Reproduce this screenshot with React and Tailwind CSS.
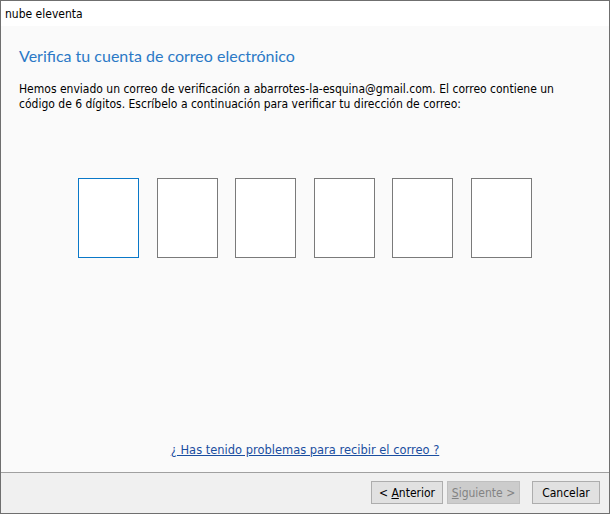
import React from "react";

export default function App() {
  const boxes = [0, 1, 2, 3, 4, 5];
  return (
    <div
      className="w-[610px] h-[514px] flex flex-col border border-[#6f6f6f] bg-white overflow-hidden"
      style={{ fontFamily: "'DejaVu Sans Condensed', 'DejaVu Sans', sans-serif" }}
    >
      <div className="h-[25px] shrink-0 bg-white flex items-center pl-[4px] text-[12px] text-black">
        nube eleventa
      </div>
      <div className="flex-1 bg-[#fafafa] flex flex-col px-[18px]">
        <h1
          className="mt-[19px] h-[22px] leading-[22px] text-[16px] text-[#2b79c6] font-normal"
          style={{ fontFamily: "'Lato', sans-serif" }}
        >
          Verifica tu cuenta de correo electrónico
        </h1>
        <p className="mt-[15px] text-[12px] leading-[15px] text-black">
          Hemos enviado un correo de verificación a abarrotes-la-esquina@gmail.com. El correo contiene un
          <br />
          código de 6 dígitos. Escríbelo a continuación para verificar tu dirección de correo:
        </p>
        <div className="mt-[66px] flex justify-center gap-[17.6px]">
          {boxes.map((i) => (
            <div
              key={i}
              className={
                i === 0
                  ? "w-[61px] h-[80px] bg-white border border-[#0a78c8]"
                  : "w-[61px] h-[80px] bg-white border border-[#7a7a7a]"
              }
            />
          ))}
        </div>
        <div className="mt-auto mb-[14px] flex justify-center">
          <a className="text-[12.75px] leading-[16px] text-[#1a4ea0] underline cursor-pointer">
            ¿ Has tenido problemas para recibir el correo ?
          </a>
        </div>
      </div>
      <div className="h-[41px] shrink-0 border-t border-[#a0a0a0] bg-[#f0f0f0] flex items-center justify-end pr-[9px] pb-[1px] text-[12px]">
        <button className="w-[72px] h-[23px] bg-[#e1e1e1] border border-[#adadad] text-black">
          &lt; <span className="underline">A</span>nterior
        </button>
        <button className="ml-[4px] w-[73px] h-[23px] bg-[#cccccc] border border-[#bfbfbf] text-[#838383]">
          <span className="underline">S</span>iguiente &gt;
        </button>
        <button className="ml-[12px] w-[68px] h-[23px] bg-[#e1e1e1] border border-[#adadad] text-black">
          Cancelar
        </button>
      </div>
    </div>
  );
}
